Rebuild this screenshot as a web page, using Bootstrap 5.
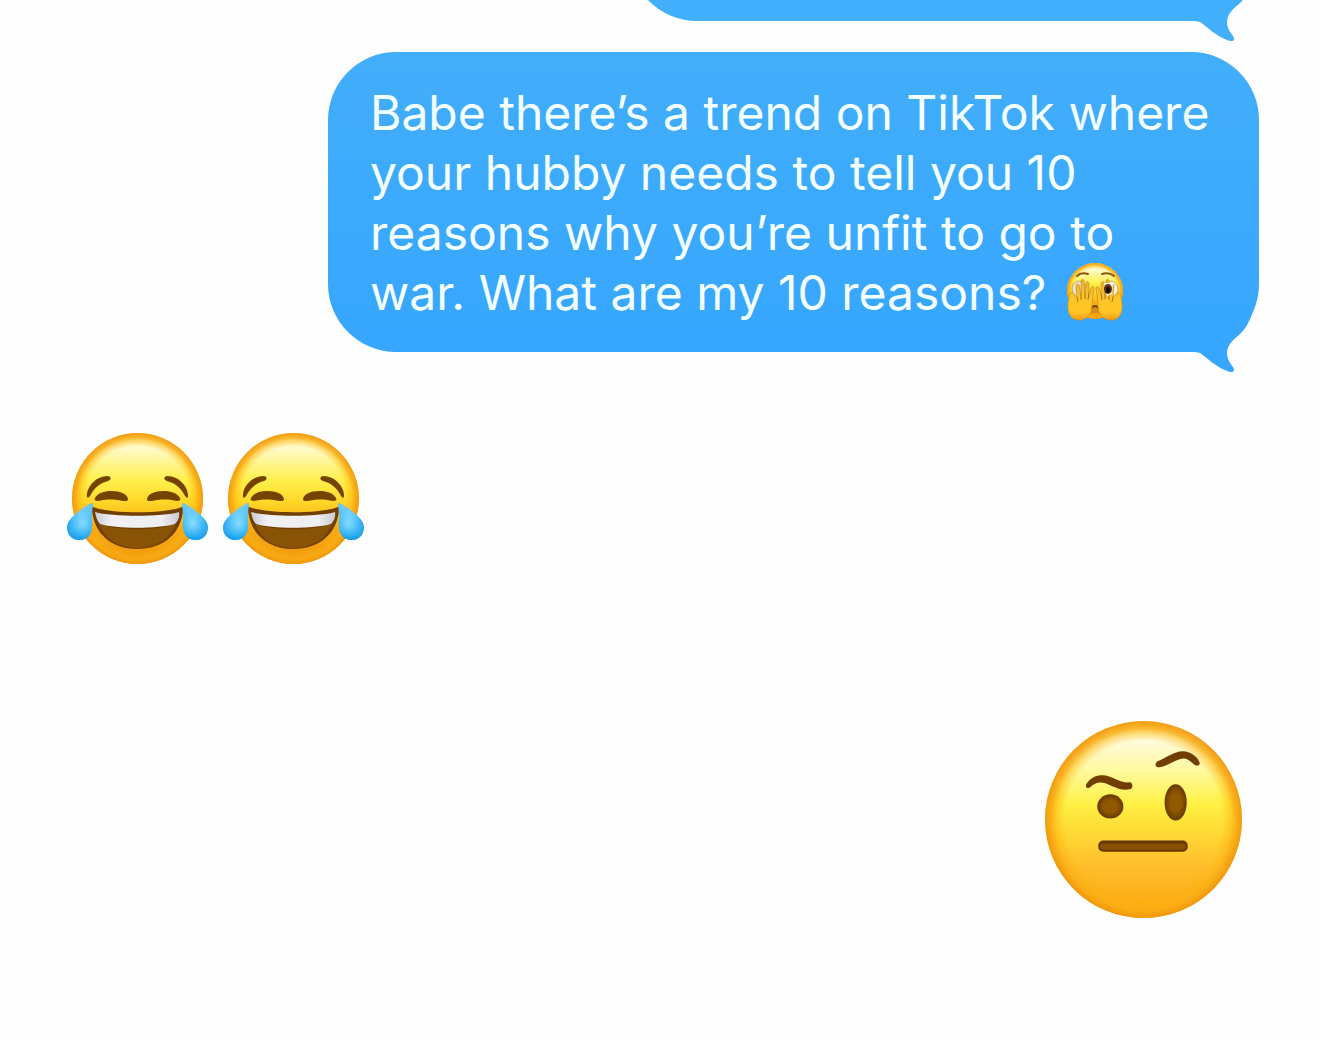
<!DOCTYPE html>
<html lang="en">
<head>
<meta charset="utf-8">
<meta name="viewport" content="width=device-width, initial-scale=1">
<title>Messages</title>
<link href="https://cdn.jsdelivr.net/npm/bootstrap@5.3.0/dist/css/bootstrap.min.css" rel="stylesheet">
<style>
  body { background: #fefefe; font-family: Inter, "Liberation Sans", sans-serif; }
  .thread { padding: 0 61px 0 67px; overflow: hidden; }
  .bubble {
    position: relative;
    max-width: 931px;
    padding: 31px 42px 29px;
    border-radius: 68px;
    background: linear-gradient(#42aefa, #36a6ff);
    color: #f4ffff;
    font-size: 48px;
    line-height: 60px;
  }
  /* Only the lower edge of the earlier message is still on screen. */
  .bubble-earlier { width: 630px; height: 150px; margin-top: -129px; background: #41affc; }
  .tail { position: absolute; right: 0; bottom: -21px; width: 69px; height: 74px; }
  .bubble + .bubble { margin-top: 31px; }
  .peek { width: 58px; height: 58px; vertical-align: -11px; margin-left: 6px; }
  .laughs { margin-top: 81px; gap: 15px; }
  .laugh { width: 141px; height: 131px; }
  .doubt-row { margin-top: 157px; padding-right: 17px; }
  .doubt { width: 197px; height: 197px; }
</style>
<script src="https://cdn.jsdelivr.net/npm/bootstrap@5.3.0/dist/js/bootstrap.bundle.min.js"></script>
</head>
<body>
<svg width="0" height="0" class="position-absolute" aria-hidden="true">
  <defs>
    <linearGradient id="skin" x1="0" y1="0" x2="0" y2="1">
      <stop offset="0" stop-color="#fff2a0"/>
      <stop offset=".1" stop-color="#fffbd8"/>
      <stop offset=".25" stop-color="#fff9a0"/>
      <stop offset=".42" stop-color="#fff044"/>
      <stop offset=".55" stop-color="#ffdc35"/>
      <stop offset=".74" stop-color="#ffbe2c"/>
      <stop offset="1" stop-color="#fba30c"/>
    </linearGradient>
    <radialGradient id="rim" cx=".5" cy=".5" r=".5">
      <stop offset=".8" stop-color="#fdb000" stop-opacity="0"/>
      <stop offset=".88" stop-color="#fcb410" stop-opacity=".45"/>
      <stop offset=".93" stop-color="#f9ac14" stop-opacity=".85"/>
      <stop offset="1" stop-color="#f0960c" stop-opacity=".95"/>
    </radialGradient>
    <linearGradient id="skin-warm" x1="0" y1="0" x2="0" y2="1">
      <stop offset="0" stop-color="#fff3a0"/>
      <stop offset=".12" stop-color="#fffac8"/>
      <stop offset=".36" stop-color="#fff04c"/>
      <stop offset=".52" stop-color="#ffd828"/>
      <stop offset=".72" stop-color="#f9ab14"/>
      <stop offset="1" stop-color="#ee9410"/>
    </linearGradient>
    <radialGradient id="brown">
      <stop offset=".5" stop-color="#905900"/>
      <stop offset="1" stop-color="#683800"/>
    </radialGradient>
    <radialGradient id="drop" cx=".6" cy=".55" r=".6">
      <stop offset="0" stop-color="#8edcfd"/>
      <stop offset=".5" stop-color="#45bdf8"/>
      <stop offset="1" stop-color="#0f94e6"/>
    </radialGradient>
    <linearGradient id="drop-shine" x1="0" y1="0" x2="0" y2="1">
      <stop offset="0" stop-color="#c5efff" stop-opacity=".6"/>
      <stop offset=".55" stop-color="#7ed8ff" stop-opacity=".2"/>
      <stop offset="1" stop-color="#0795e8" stop-opacity=".7"/>
    </linearGradient>
    <linearGradient id="teeth" x1="0" y1="0" x2="1" y2="0">
      <stop offset="0" stop-color="#c9c9d2"/>
      <stop offset=".2" stop-color="#f1f1f5"/>
      <stop offset=".8" stop-color="#ededf2"/>
      <stop offset="1" stop-color="#c9c9d2"/>
    </linearGradient>
    <linearGradient id="hand" x1="0" y1="0" x2="0" y2="1">
      <stop offset="0" stop-color="#e3b03a"/>
      <stop offset=".5" stop-color="#fbc62a"/>
      <stop offset=".8" stop-color="#ffc524"/>
      <stop offset="1" stop-color="#ef9d1a"/>
    </linearGradient>
    <linearGradient id="tail-fill" x1="0" y1="0" x2="0" y2="1">
      <stop offset="0" stop-color="#38a7fe"/>
      <stop offset=".7" stop-color="#36a6ff"/>
    </linearGradient>
    <path id="tail-shape" d="M0 0H65C63 15 59 27 49 36C41 42 37 48 37 54C37 60 40 64 43 68C46 73 42 74 37 72C26 68 17 59 10 54Q7 53 3 53H0Z"/>
    <g id="laugh-half">
      <path d="M20 64C19 55 28 43 41 43C45 44 44 47 41 48C33 50 27 55 23 63Q21 66 20 64Z" fill="#754300"/>
      <path d="M28 65C31 60 37 58 44 58C54 58 60 61 61 66C61 69 57 68 50 67C42 66 36 67 31 68C28 68 27 67 28 65Z" fill="#754300"/>
      <path d="M25 70C18 73 7 81 2 88C-3 96 2 107 12 107C24 107 26 97 25 87C24 80 27 71 25 70Z" fill="url(#drop)"/>
      <path d="M25 70C18 73 7 81 2 88C-3 96 2 107 12 107C24 107 26 97 25 87C24 80 27 71 25 70Z" fill="url(#drop-shine)"/>
    </g>
    <symbol id="laugh" viewBox="0 0 141 131">
      <circle cx="70.500" cy="65.500" r="65.500" fill="url(#skin-warm)"/>
      <circle cx="70.500" cy="65.500" r="65.500" fill="url(#rim)"/>
      <path d="M26 74C43 81 98 81 115 74Q117 74 116 77C114 101 96 116 70 116C45 116 27 101 25 77Q24 74 26 74Z" fill="#713f02"/>
      <path d="M32 91C50 98 91 98 109 91C103 106 89 115 70 115C52 115 38 106 32 91Z" fill="#895306"/>
      <path d="M28 79C45 84 96 84 112 79C113 84 111 88 108 91C90 96 50 96 33 91C30 88 29 84 28 79Z" fill="url(#teeth)"/>
      <use href="#laugh-half"/>
      <use href="#laugh-half" transform="translate(141) scale(-1 1)"/>
    </symbol>
    <g id="peek-hand">
      <path d="M3 34C1 42 1 50 6 55C12 59 20 57 23 52C26 48 26 44 26 39L28 26C28 23 26 23 25 25L23 30L23 21C23 18 20 18 20 20L19 29L18 18C17 15 15 16 15 19L15 30L13 22C12 20 10 21 10 23L11 34L7 30C5 28 3 31 3 34Z" fill="url(#hand)" stroke="#c98a14" stroke-width=".6" stroke-linejoin="round"/>
      <path d="M11 34L12 39M15 30L15 37M19 29L19 36M23 30L22 37" stroke="#a96f10" stroke-width="1" fill="none"/>
    </g>
  </defs>
</svg>

<main class="thread d-flex flex-column">
  <div class="bubble bubble-earlier align-self-end">
    <svg class="tail" viewBox="0 0 69 74" aria-hidden="true"><use href="#tail-shape" fill="#41affc"/></svg>
  </div>

  <div class="bubble align-self-end w-100">
    <svg class="tail" viewBox="0 0 69 74" aria-hidden="true"><use href="#tail-shape" fill="url(#tail-fill)"/></svg>
    <p class="position-relative m-0">Babe there’s a trend on TikTok where<br>
      your hubby needs to tell you 10<br>
      reasons why you’re unfit to go to<br>
      war. What are my 10 reasons?
      <svg class="peek" viewBox="0 0 58 58" role="img" aria-label="Face with peeking eye">
        <circle cx="29" cy="28" r="28" fill="url(#skin-warm)"/>
        <circle cx="29" cy="28" r="28" fill="url(#rim)"/>
        <path d="M11 13Q15 9 22 11M36 11Q43 9 48 13" fill="none" stroke="#8b5509" stroke-width="2" stroke-linecap="round"/>
        <ellipse cx="13" cy="26" rx="7" ry="8" fill="#e9e2ca" stroke="#a7833c" stroke-width=".6"/>
        <ellipse cx="44" cy="26" rx="8" ry="8" fill="#f5f0e8" stroke="#a7833c" stroke-width=".6"/>
        <path d="M22 50Q29 36 36 50" fill="#d98a18" stroke="#75420b" stroke-width="2"/>
        <use href="#peek-hand"/>
        <use href="#peek-hand" transform="translate(58) scale(-1 1)"/>
        <path d="M38 20L47 20L46 31L41 33Z" fill="#f5f0e8"/>
        <ellipse cx="42" cy="26" rx="4" ry="5" fill="#573312"/>
        <ellipse cx="42" cy="27" rx="2" ry="3" fill="#100a05"/>
      </svg></p>
  </div>

  <div class="laughs d-flex">
    <svg class="laugh" role="img" aria-label="Face with tears of joy"><use href="#laugh"/></svg>
    <svg class="laugh" role="img" aria-label="Face with tears of joy"><use href="#laugh"/></svg>
  </div>

  <div class="doubt-row d-flex justify-content-end">
    <svg class="doubt" viewBox="0 0 196 196" role="img" aria-label="Face with raised eyebrow">
      <circle cx="98" cy="98" r="98" fill="url(#skin)"/>
      <circle cx="98" cy="98" r="98" fill="url(#rim)"/>
      <path d="M41 63C47 53 57 53 63 55C72 58 77 62 84 61C88 61 88 68 84 68C74 70 66 64 60 62C54 60 49 62 45 66C42 68 40 66 41 63Z" fill="#713d00"/>
      <path d="M112 40C120 37 128 30 137 30C146 30 153 37 154 42C154 45 150 45 148 43C143 38 139 36 134 38C127 40 121 45 114 46C109 47 109 42 112 40Z" fill="#713d00"/>
      <ellipse cx="65" cy="85" rx="13" ry="12" fill="url(#brown)"/>
      <ellipse cx="130" cy="81" rx="11" ry="18" fill="url(#brown)"/>
      <rect x="53" y="119" width="89" height="11" rx="5" fill="#653600"/>
      <rect x="55" y="122" width="85" height="6" rx="3" fill="#865000"/>
    </svg>
  </div>
</main>
</body>
</html>
